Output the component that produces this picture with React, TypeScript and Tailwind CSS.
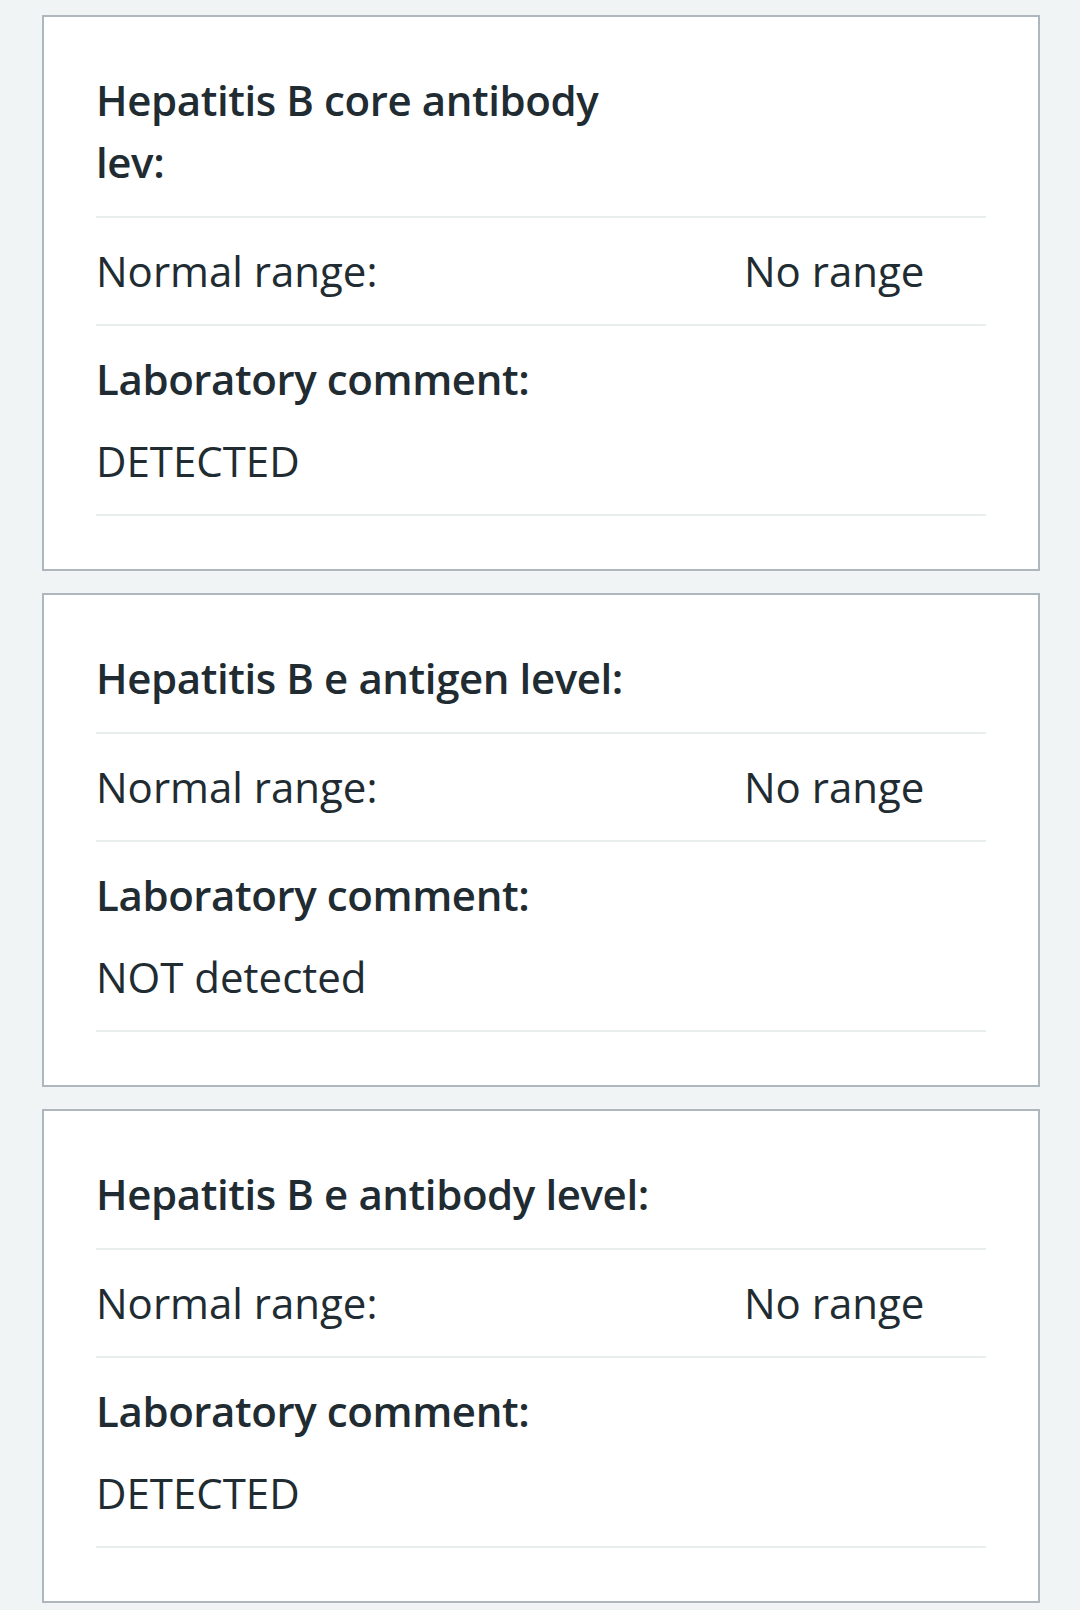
import React from 'react';

interface LabResult {
  title: string;
  range: string;
  comment: string;
}

const results: LabResult[] = [
  { title: 'Hepatitis B core antibody\nlev:', range: 'No range', comment: 'DETECTED' },
  { title: 'Hepatitis B e antigen level:', range: 'No range', comment: 'NOT detected' },
  { title: 'Hepatitis B e antibody level:', range: 'No range', comment: 'DETECTED' },
];

function ResultCard({ result }: { result: LabResult }) {
  return (
    <div className="bg-white border-2 border-[#aeb7bd] px-[52px] pt-[52px] pb-[53px]">
      {/* Test name */}
      <h2 className="whitespace-pre-line font-semibold tracking-[-0.4px] text-[42px] leading-[62px] pb-[23px] border-b-2 border-[#e8edee]">
        {result.title}
      </h2>

      {/* Range row */}
      <div className="grid grid-cols-[648px_1fr] py-[22px] border-b-2 border-[#e8edee]">
        <span>Normal range:</span>
        <span>{result.range}</span>
      </div>

      {/* Comment */}
      <div className="pt-[22px] pb-[22px] border-b-2 border-[#e8edee]">
        <div className="font-semibold tracking-[-0.4px]">Laboratory comment:</div>
        <div className="mt-[20px]">{result.comment}</div>
      </div>
    </div>
  );
}

export default function App() {
  return (
    <div
      className="min-h-[1610px] bg-[#f0f4f5] pt-[15px] pl-[42px] pr-[40px] text-[#212b32] text-[42px] leading-[62px]"
      style={{ fontFamily: '"Open Sans", "Noto Sans", sans-serif' }}
    >
      <div className="flex flex-col gap-[22px]">
        {results.map((r, i) => (
          <ResultCard key={i} result={r} />
        ))}
      </div>
    </div>
  );
}
